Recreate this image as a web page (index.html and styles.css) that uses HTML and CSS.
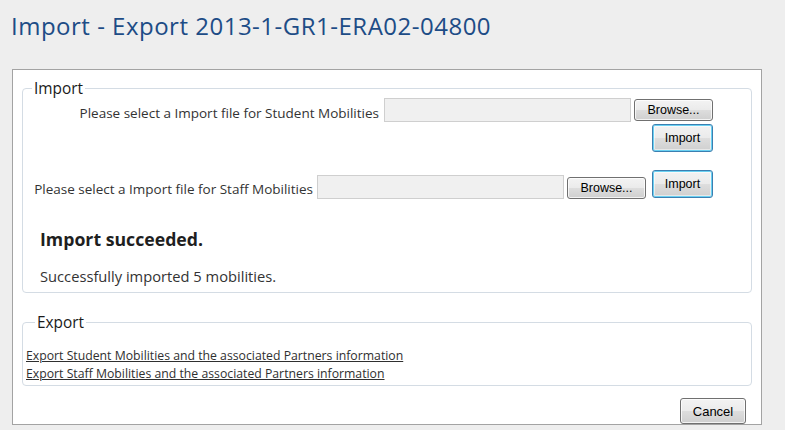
FILE: index.html
```html
<!DOCTYPE html>
<html lang="en">
<head>
<meta charset="utf-8">
<title>Import - Export</title>
<link rel="stylesheet" href="styles.css">
</head>
<body>
<h1 class="page-title">Import - Export 2013-1-GR1-ERA02-04800</h1>
<div class="panel">
  <fieldset class="group group-import">
    <legend class="group-legend">Import</legend>
    <div class="file-row file-row-student">
      <label class="file-label">Please select a Import file for Student Mobilities</label>
      <input class="file-path" type="text" readonly>
      <button class="btn btn-browse" type="button">Browse...</button>
    </div>
    <div class="submit-row">
      <button class="btn btn-default" type="button">Import</button>
    </div>
    <div class="file-row file-row-staff">
      <label class="file-label">Please select a Import file for Staff Mobilities</label>
      <input class="file-path" type="text" readonly>
      <button class="btn btn-browse" type="button">Browse...</button>
      <button class="btn btn-default btn-inline" type="button">Import</button>
    </div>
    <div class="result">
      <h2 class="result-title">Import succeeded.</h2>
      <p class="result-text">Successfully imported 5 mobilities.</p>
    </div>
  </fieldset>
  <fieldset class="group group-export">
    <legend class="group-legend">Export</legend>
    <div class="export-links">
      <a class="export-link" href="#">Export Student Mobilities and the associated Partners information</a>
      <a class="export-link" href="#">Export Staff Mobilities and the associated Partners information</a>
    </div>
  </fieldset>
  <div class="actions">
    <button class="btn btn-cancel" type="button">Cancel</button>
  </div>
</div>
</body>
</html>
```
FILE: styles.css
```css
html, body {
  margin: 0;
  padding: 0;
  background: #eeeeee;
}

body {
  font-family: "Open Sans", "Noto Sans", sans-serif;
  color: #333333;
}

.page-title {
  margin: 11px 0 28px 11px;
  font-family: "Open Sans", sans-serif;
  font-weight: 400;
  font-size: 24px;
  line-height: 30px;
  letter-spacing: 0.5px;
  color: #1d4c86;
}

.panel {
  margin-left: 12px;
  width: 748px;
  background: #ffffff;
  border: 1px solid #a3a3a3;
  display: flex;
  flex-direction: column;
}

.group {
  margin: 0 9px;
  padding: 0;
  min-width: 0;
  border: 1px solid #d4dce4;
  border-radius: 4px;
}

.group-legend {
  margin-left: 9px;
  padding: 0 2px;
  font-size: 15.4px;
  line-height: 17px;
  color: #1a1a1a;
}

.group-import {
  margin-top: 10px;
  padding: 0 38px 6px 0;
}

.group-export {
  margin-top: 21px;
  padding: 0 0 2px 3px;
}

.file-row {
  display: flex;
  justify-content: flex-end;
  align-items: flex-start;
}

.file-row-student {
  margin-top: 1px;
  height: 24px;
}

.file-row-staff {
  margin-top: 18px;
  height: 29px;
}

.file-label {
  font-size: 13.5px;
  line-height: 18px;
  color: #333333;
  margin-right: 4px;
  white-space: nowrap;
}

.file-row-student .file-label {
  margin-top: 6px;
  margin-right: 5px;
}

.file-row-staff .file-label {
  margin-top: 10px;
}

.file-path {
  box-sizing: border-box;
  width: 247px;
  height: 24px;
  margin: 0 3px 0 0;
  padding: 0;
  border: 1px solid #cfcfcf;
  background: #f0f0f0;
  outline: none;
}

.file-row-staff .file-path {
  margin-top: 5px;
}

.btn {
  box-sizing: border-box;
  margin: 0;
  padding: 0;
  font-family: "Liberation Sans", Arial, sans-serif;
  font-size: 12.5px;
  color: #000000;
  border: 1px solid #707070;
  border-radius: 3px;
  background: linear-gradient(#f3f3f3 0%, #ebebeb 48%, #dddddd 52%, #cfcfcf 100%);
  box-shadow: inset 0 0 0 1px rgba(255, 255, 255, 0.75);
  cursor: default;
}

.btn-browse {
  width: 79px;
  height: 22px;
  margin-top: 1px;
}

.file-row-staff .btn-browse {
  margin-top: 7px;
}

.btn-default {
  width: 61px;
  height: 28px;
  border-color: #3c7fb1;
  box-shadow: inset 0 0 0 1px #6ad1f2, inset 0 0 0 2px rgba(255, 255, 255, 0.5);
}

.btn-inline {
  margin-left: 6px;
}

.submit-row {
  display: flex;
  justify-content: flex-end;
  margin-top: 2px;
}

.result {
  padding-left: 17px;
}

.result-title {
  margin: 28px 0 0;
  font-size: 17.7px;
  font-weight: 700;
  line-height: 24px;
  color: #1f1f1f;
}

.result-text {
  margin: 15px 0 0;
  font-size: 14.7px;
  line-height: 20px;
  color: #333333;
}

.export-links {
  margin-top: 16px;
  display: flex;
  flex-direction: column;
  align-items: flex-start;
}

.export-link {
  font-size: 12.25px;
  line-height: 18px;
  color: #2f2f2f;
  text-decoration: underline;
}

.actions {
  display: flex;
  justify-content: flex-end;
  padding-right: 15px;
  margin-top: 12px;
}

.btn-cancel {
  width: 66px;
  height: 26px;
  font-size: 13px;
}
```
